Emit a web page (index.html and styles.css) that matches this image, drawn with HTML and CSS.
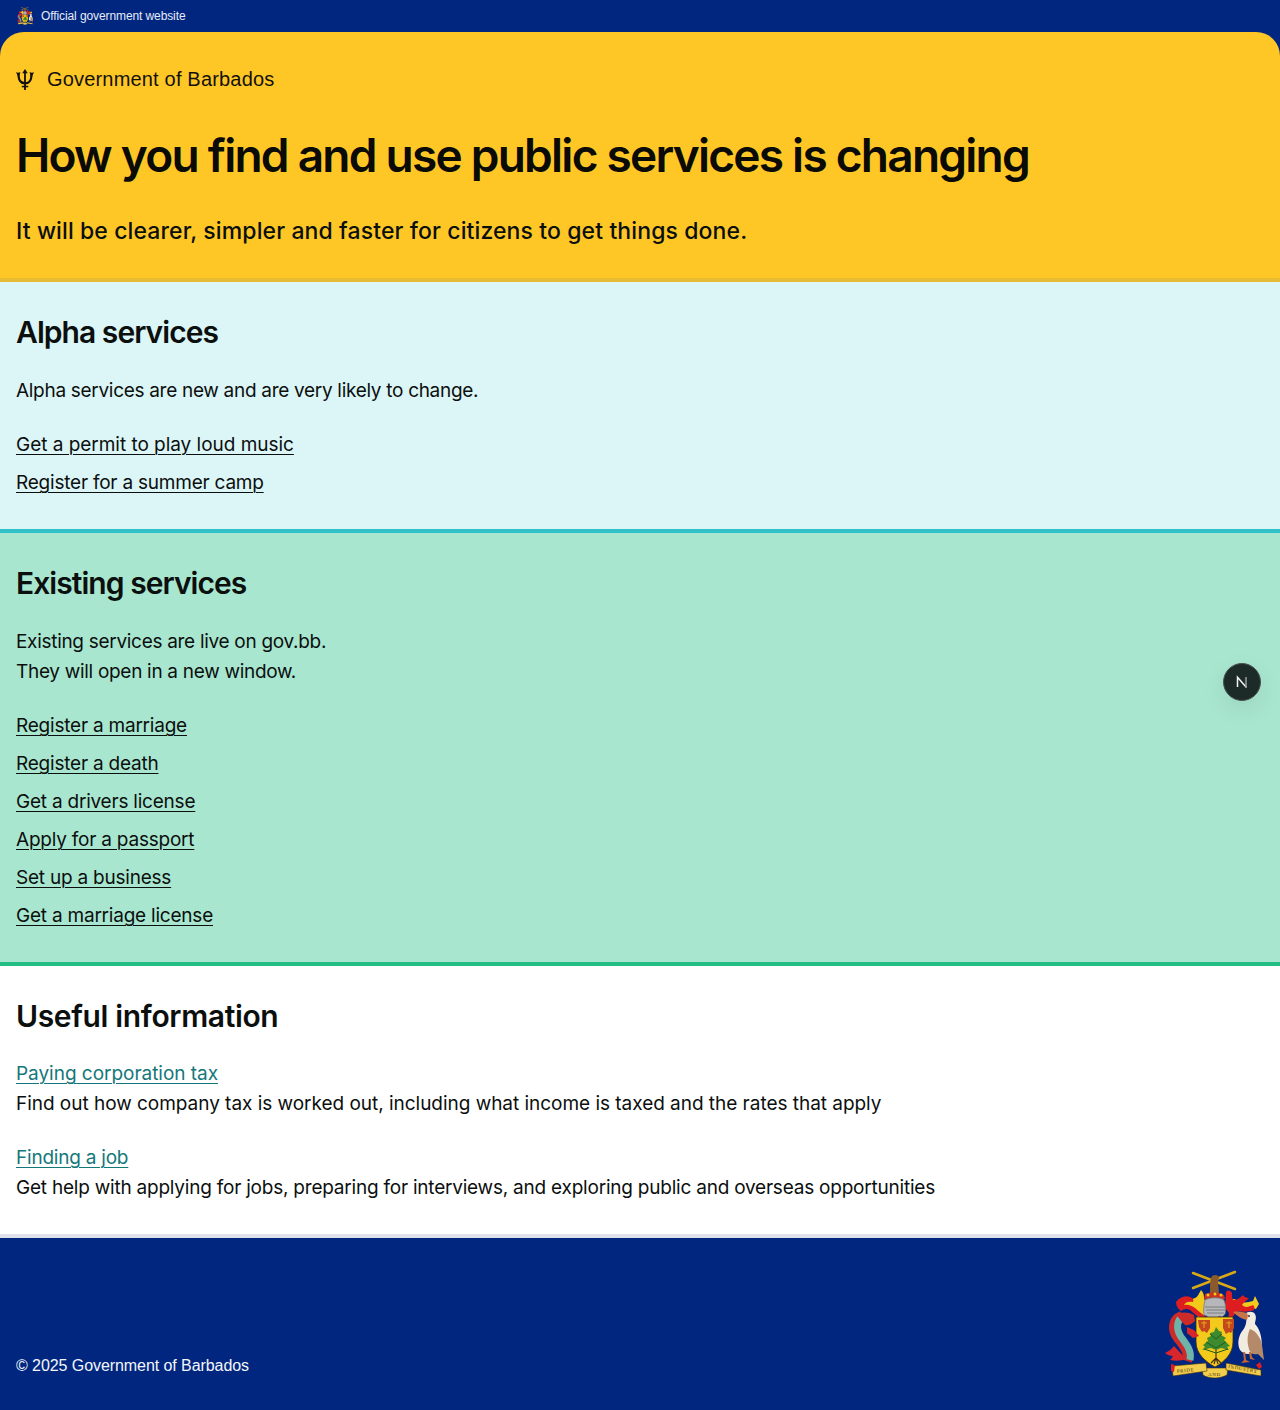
FILE: index.html
```html
<!DOCTYPE html>
<html lang="en">
<head>
<meta charset="utf-8">
<title>Government of Barbados</title>
<link rel="stylesheet" href="styles.css">
</head>
<body>
<svg class="defs" width="0" height="0" aria-hidden="true">
  <symbol id="arms" viewBox="14 10 102 110">
    <g fill="none" stroke="#d9a815" stroke-width="2.600" stroke-linecap="round">
      <path d="M43 13 85 29"/><path d="M85 12 43 28"/>
    </g>
    <path d="M60 30c0-6 0-11 2-14 3-2 6-1 7 1l-1 5 1 11H60z" fill="#8a5a2c"/>
    <path d="M55 34c6-2 13-2 19 1l1 4H54z" fill="#c8321f"/>
    <circle cx="58" cy="35" r="1.500" fill="#f3c91b"/><circle cx="65" cy="34" r="1.500" fill="#f3c91b"/><circle cx="71" cy="35" r="1.500" fill="#f3c91b"/>
    <!-- mantling, left -->
    <path d="M33 42c4-3 8-2 12-4 3-1 4-5 6-8 3 3 3 6 3 9l3 3-3 5 1 7-5 5-5-6-4-6c-3-1-5 0-8 2-1-3-1-5 0-7z" fill="#f3c91b"/>
    <path d="M26 42c4-5 9-7 14-5 3 1 4 3 3 5-4-1-8 0-9 3 4-1 8 1 11 3 3 3 6 5 10 8l-1 2c-6-1-10-4-14-8-3-2-6-1-9 1-3-2-5-5-5-9z" fill="#dd1d1f"/>
    <!-- mantling, right -->
    <path d="M78 40l6-1 8 3c3 1 7 0 11-1l2-5 4 8-3 5c-5-2-9-1-13-2-4 2-8 5-11 8l-3-5z" fill="#f3c91b"/>
    <path d="M76 32c2-2 4-2 6 1 0 3 0 5 1 7 4 0 7-2 10-5 1 2 3 3 6 3-3 3-5 4-7 7 3 3 7 2 11 0 1 1 2 3 1 5-5 2-11 2-15 1-3 1-6 5-9 10l-2-1 1-7-4-5z" fill="#dd1d1f"/>
    <!-- helm -->
    <path d="M55 40c5-3 15-3 19 0 2 5 2 10 1 14l-3 3-3-1-1 2c-3 1-6 1-9 0l-2-2-3-1c-1-5 0-10 1-15z" fill="#b5b7ba" stroke="#77797c" stroke-width=".8"/>
    <path d="M55 47h20M56 50h19M57 53h17" stroke="#75777a" stroke-width=".9"/>
    <!-- shield -->
    <path d="M46 57h37v25c0 12-9 20-18 25-9-5-19-13-19-25z" fill="#f3c91b" stroke="#40300f" stroke-width=".8"/>
    <path d="M48 60h12v8l-3 5-3-2-2 1-3-5zM73 59h11v9l-3 5-2-1-3 2-3-6z" fill="#c5471e"/>
    <path d="M51 63h6M54 61v7M76 63h6M79 61v7" stroke="#e5a11a" stroke-width="1.200"/>
    <!-- tree -->
    <g stroke="#3f2b12" fill="none" stroke-width="1.100">
      <path d="M66 70V98M66 98l-5 5M66 98l-2 6M66 98l2 6M66 98l5 5"/>
    </g>
    <path d="M66 67l3 4 3 1-1 3 5 3-2 2 6 6-3 1 2 3-8-2-5 2-5-2-9 2 3-3-2-2 5-4-1-3 4-2-1-3 4-1z" fill="#3e8a2f"/>
    <path d="M60 74l6 5 6-5M56 82l10 6 10-6M54 89l12 4 12-4" fill="none" stroke="#1f5a20" stroke-width="1"/>
    <!-- dolphin -->
    <path d="M24 86c-2 3-5 5-9 7 2 2 5 3 8 3-1 2-2 3-3 4 5 1 12 1 16-1z" fill="#d9262a"/>
    <path d="M32 56C22 60 22 70 28 78 34 86 40 92 37 101" fill="none" stroke="#cd2a2a" stroke-width="10"/>
    <path d="M34 56C26 60 26 69 31 77 37 85 42 91 40 100" fill="none" stroke="#6fb3a9" stroke-width="7"/>
    <path d="M28 53c5-1 12-1 16 2l1 6c-3 3-7 5-10 4l-3-3-4-5z" fill="#cd2a2a"/>
    <path d="M37 67l7 3 5 6-6 2-6-5z" fill="#d9262a"/>
    <!-- pelican -->
    <path d="M95 54c3-3 8-3 10 0 2 4 0 7 0 10 6 6 8 18 6 28l-8 1c-5 2-10 1-13-3-3-6-2-14 3-20 3-4 4-9 3-16z" fill="#f2ebe0"/>
    <path d="M83 52c5-1 10 0 14 1l1 3-1 4c-5-1-10-4-14-8z" fill="#c97348"/>
    <path d="M100 69c6 2 11 9 12 16l2 15-6-6c-4 1-8-1-9-5-2-7-2-14 1-20z" fill="#b58a6a"/>
    <path d="M93 92h2l1 8 4 2-9 1 3-3zM99 92h2l1 5 3 3-5-1z" fill="#c8642e"/>
    <circle cx="99" cy="56" r=".9" fill="#222"/>
    <!-- motto scroll -->
    <path d="M52 108h26l-1 7c-4 2-8 3-12 3-5 0-9-1-12-3z" fill="#f2cc4d" stroke="#40300f" stroke-width=".6"/>
    <path d="M22 106l34-3 1 8-34 5z" fill="#f2cc4d" stroke="#40300f" stroke-width=".6"/>
    <path d="M76 103l35 7v6l-35-6z" fill="#f2cc4d" stroke="#40300f" stroke-width=".6"/>
    <path d="M21 104l4 1-1 7-3-1zM106 105l4-3 2 5-3 2z" fill="#dd1d1f"/>
  </symbol>
</svg>

<header class="topbar">
  <svg class="topbar-arms" aria-hidden="true"><use href="#arms"/></svg>
  <span>Official government website</span>
</header>

<section class="hero">
  <div class="brand">
    <svg class="trident" viewBox="0 0 18 21" aria-hidden="true">
      <path d="M9 0 6.200 4.200h1.900V21h1.800V4.200h1.900z" fill="#12110c"/>
      <path d="M0 3.200c1.300.6 3 .6 4.400-.1-.6 1.700-.8 3.200-.6 4.800.3 3 1.700 4.800 5.200 5.100s4.900-2.100 5.200-5.100c.2-1.600 0-3.100-.6-4.800 1.400.7 3.100.7 4.400.1-1 1.600-1.500 3.200-1.700 5-.4 4-2.900 7.200-7.300 7.300-4.400-.1-6.900-3.300-7.300-7.300C1.500 6.400 1 4.800 0 3.200z" fill="#12110c"/>
      <path d="M5.800 16.800h6.400v1.500H5.800z" fill="#12110c"/>
    </svg>
    <span>Government of Barbados</span>
  </div>
  <h1>How you find and use public services is changing</h1>
  <p class="lead">It will be clearer, simpler and faster for citizens to get things done.</p>
</section>

<section class="band band-alpha">
  <h2>Alpha services</h2>
  <p>Alpha services are new and are very likely to change.</p>
  <ul class="links">
    <li><a class="wide" href="#">Get a permit to play loud music</a></li>
    <li><a href="#">Register for a summer camp</a></li>
  </ul>
</section>

<section class="band band-existing">
  <h2>Existing services</h2>
  <p>Existing services are live on gov.bb.<br>They will open in a new window.</p>
  <ul class="links">
    <li><a href="#">Register a marriage</a></li>
    <li><a href="#">Register a death</a></li>
    <li><a href="#">Get a drivers license</a></li>
    <li><a href="#">Apply for a passport</a></li>
    <li><a href="#">Set up a business</a></li>
    <li><a href="#">Get a marriage license</a></li>
  </ul>
</section>

<section class="band band-info">
  <h2 class="wide-heading">Useful information</h2>
  <div class="info-item">
    <a class="wide" href="#">Paying corporation tax</a>
    <p class="wide">Find out how company tax is worked out, including what income is taxed and the rates that apply</p>
  </div>
  <div class="info-item">
    <a href="#">Finding a job</a>
    <p>Get help with applying for jobs, preparing for interviews, and exploring public and overseas opportunities</p>
  </div>
</section>

<footer class="footer">
  <span>© 2025 Government of Barbados</span>
  <svg class="footer-arms" viewBox="14 10 102 110" role="img" aria-label="Coat of arms of Barbados">
    <use href="#arms" x="14" y="10" width="102" height="110"/>
    <g class="motto">
      <text x="27" y="113" transform="rotate(-6 27 113)">PRIDE</text>
      <text x="58" y="116">AND</text>
      <text x="78" y="108" transform="rotate(10 78 108)">INDUSTRY</text>
    </g>
  </svg>
</footer>

<div class="dev-badge" aria-hidden="true">
  <svg viewBox="0 0 16 16" width="16" height="16">
    <path d="M3.500 13V3.200L12.500 13.500" fill="none" stroke="#f4f4f4" stroke-width="1.500"/>
    <path d="M12 3v10" stroke="#9aa09d" stroke-width="1.500"/>
  </svg>
</div>
</body>
</html>
```

FILE: styles.css
```css
* { box-sizing: border-box; }
html, body { margin: 0; padding: 0; }
body {
  font-family: "Inter", "Liberation Sans", sans-serif;
  color: #0b0f0e;
  background: #00267f;
  position: relative;
  font-size: 19px;
  line-height: 30px;
  letter-spacing: -.22px;
}
.defs { position: absolute; }
.topbar {
  height: 32px;
  background: #00267f;
  color: #e6ebf7;
  display: flex;
  align-items: center;
  gap: 7px;
  padding-left: 16px;
  font-family: "Liberation Sans", sans-serif;
  font-size: 12px;
  line-height: 16px;
  letter-spacing: -.1px;
}
.topbar-arms { width: 18px; height: 18px; }
.hero {
  height: 250px;
  background: #ffc726;
  border-radius: 24px 24px 0 0;
  border-bottom: 4px solid #e8bb35;
  padding: 32px 16px 0;
}
.brand {
  display: flex;
  align-items: center;
  gap: 13px;
  height: 30px;
  font-family: "Liberation Sans", sans-serif;
  font-size: 20px;
  letter-spacing: .18px;
  color: #12110c;
}
.trident { width: 18px; height: 21px; }
h1 {
  margin: 31px 0 0;
  font-size: 46px;
  line-height: 60px;
  font-weight: 600;
  letter-spacing: -1.75px;
  color: #0a0a06;
}
.lead {
  margin: 30px 0 0;
  font-size: 23px;
  line-height: 32px;
  font-weight: 500;
  letter-spacing: .11px;
}
.band { padding: 32px 16px; }
h2 {
  margin: 0;
  font-size: 30px;
  line-height: 36px;
  font-weight: 600;
  letter-spacing: -.95px;
}
.wide-heading { letter-spacing: -.35px; }
.band p { margin: 0; }
.band > p { margin-top: 26px; letter-spacing: -.3px; }
.links { list-style: none; margin: 24px 0 0; padding: 0; display: flex; flex-direction: column; gap: 8px; }
a { color: inherit; text-underline-offset: 3px; text-decoration-thickness: 1px; }
.band .wide { letter-spacing: -.03px; }
.band-alpha { height: 251px; background: #dcf5f6; border-bottom: 4px solid #30c0c8; }
.band-existing { height: 433px; background: #a8e6cf; border-bottom: 4px solid #22bf85; }
.band-info { height: 272px; background: #fff; border-bottom: 4px solid #dfe2ea; }
.info-item { margin-top: 24px; }
.info-item:first-of-type { margin-top: 25px; }
.info-item a { color: #14777a; }
.footer {
  height: 172px;
  background: #00267f;
  color: #f4f6fb;
  padding: 32px 16px 32px;
  display: flex;
  justify-content: space-between;
  align-items: flex-end;
  font-family: "Liberation Sans", sans-serif;
  font-size: 16px;
  line-height: 24px;
  letter-spacing: -.07px;
}
.footer-arms { width: 102px; height: 110px; margin: 0 -2px -2px 0; }
.motto { font-family: "Liberation Serif", serif; font-size: 5px; letter-spacing: .6px; fill: #40300f; }
.dev-badge {
  position: absolute;
  left: 1223px;
  top: 663px;
  width: 38px;
  height: 38px;
  border-radius: 50%;
  background: #1d2b28;
  border: 1px solid #48524f;
  display: flex;
  align-items: center;
  justify-content: center;
  box-shadow: 0 8px 24px rgba(0,0,0,.08);
}
```
